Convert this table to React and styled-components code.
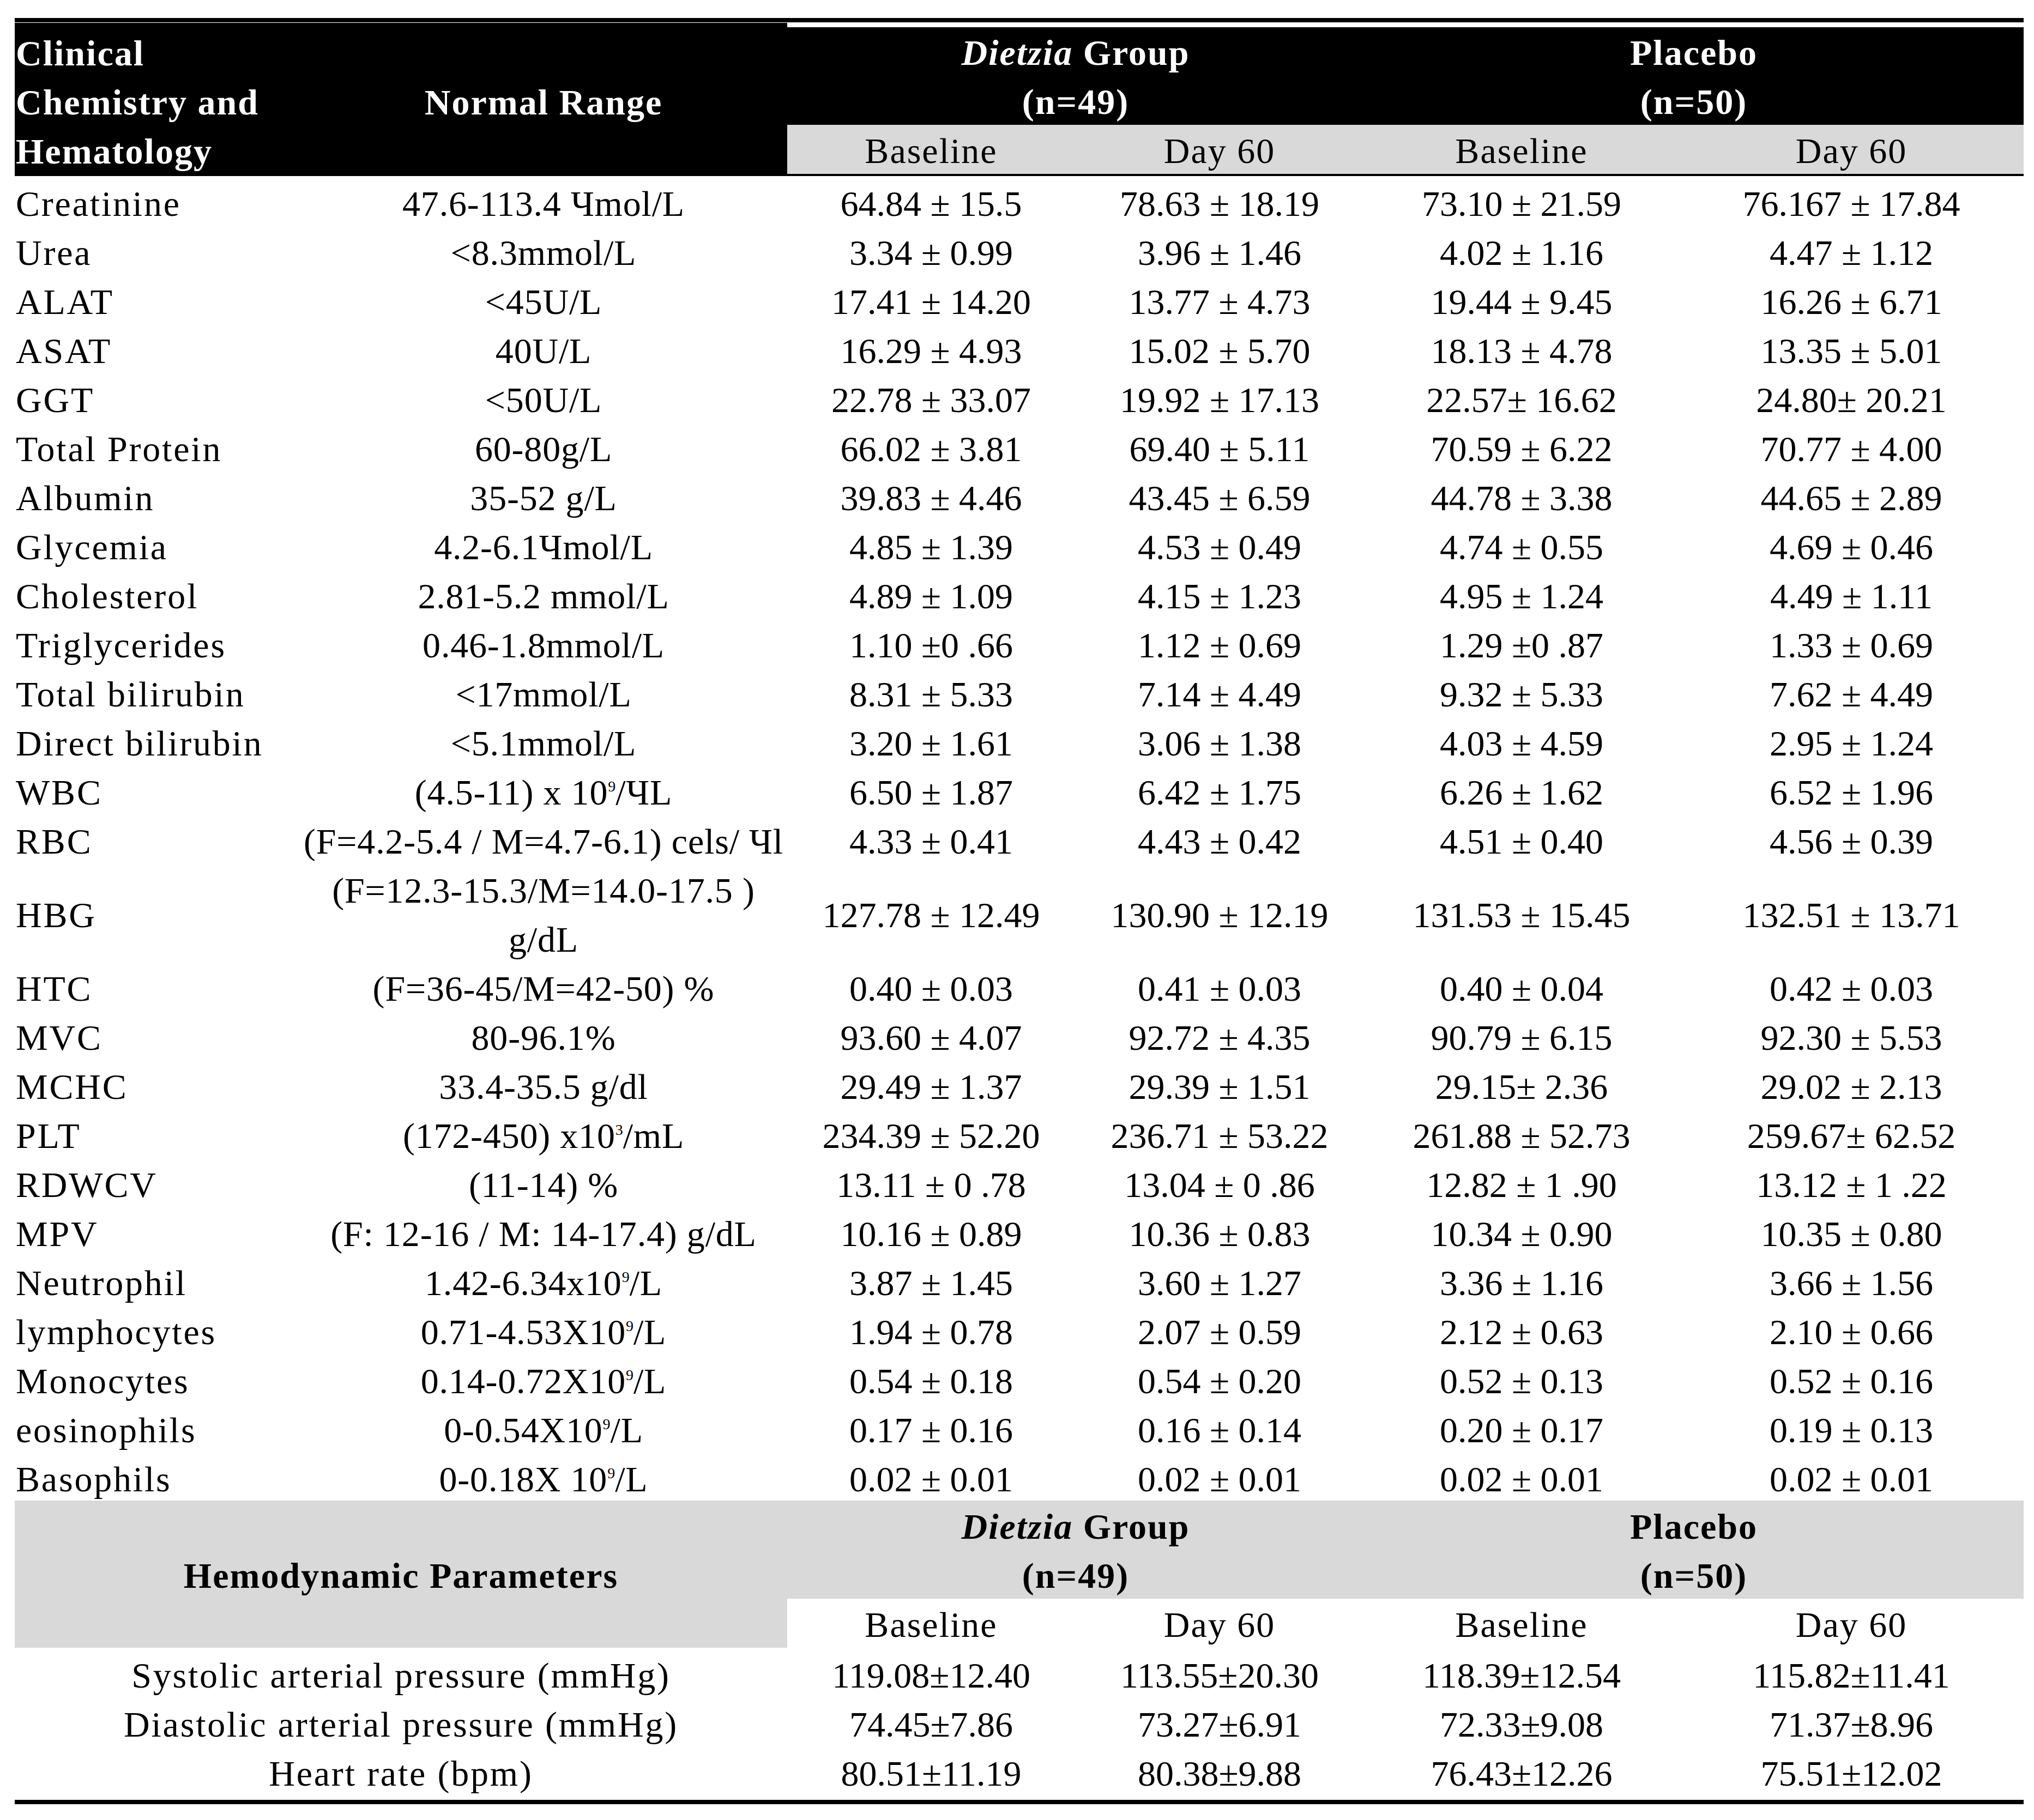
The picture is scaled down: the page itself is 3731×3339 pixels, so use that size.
import React from "react";
import styled, { createGlobalStyle } from "styled-components";

const COLS = "523px 894px 528px 530px 578px 632px";
const LINE = 90;
const GRAY = "#d9d9d9";

const GlobalStyle = createGlobalStyle`
  html, body { margin: 0; padding: 0; background: #ffffff; }
  body {
    font-family: "Liberation Serif", "Times New Roman", serif;
    font-size: 66px;
    color: #000000;
  }
`;

const Page = styled.div`
  padding: 33px 0 0 27px;
  width: 3685px;
`;

const Rule = styled.div`
  height: 8px;
  background: #000000;
  margin-top: ${(p) => p.$gap || 0}px;
`;

/* ---------- header ---------- */
const HeaderGrid = styled.div`
  display: grid;
  grid-template-columns: ${COLS};
  grid-template-rows: 8px 179px 90px 4px;
  margin-top: 1px;
`;

const HeadTitle = styled.div`
  grid-column: 1;
  grid-row: 1 / 5;
  background: #000000;
  color: #ffffff;
  font-weight: 700;
  line-height: ${LINE}px;
  letter-spacing: 2px;
  padding: 11px 0 0 2px;
  white-space: nowrap;
`;

const HeadRange = styled.div`
  grid-column: 2;
  grid-row: 1 / 5;
  background: #000000;
  color: #ffffff;
  font-weight: 700;
  line-height: ${LINE}px;
  letter-spacing: 2px;
  text-align: center;
  padding-top: 101px;
  white-space: nowrap;
`;

const GroupHead = styled.div`
  grid-column: ${(p) => p.$col} / span 2;
  grid-row: 2;
  background: #000000;
  color: #ffffff;
  font-weight: 700;
  line-height: ${LINE}px;
  letter-spacing: 2px;
  text-align: center;
  padding-top: 2px;
  white-space: nowrap;
`;

const SubHead = styled.div`
  grid-row: 3;
  grid-column: ${(p) => p.$col};
  background: ${GRAY};
  line-height: ${LINE}px;
  letter-spacing: 2px;
  text-align: center;
  padding-top: 3px;
  white-space: nowrap;
`;

const HeadBar = styled.div`
  grid-row: 4;
  grid-column: 3 / 7;
  background: #000000;
`;

/* ---------- body ---------- */
const Row = styled.div`
  display: grid;
  grid-template-columns: ${COLS};
  height: ${(p) => (p.$lines || 1) * LINE}px;
`;

const Cell = styled.div`
  display: flex;
  align-items: center;
  justify-content: center;
  text-align: center;
  line-height: ${LINE}px;
  padding-top: 6px;
  white-space: nowrap;
`;

const LabelCell = styled(Cell)`
  justify-content: flex-start;
  text-align: left;
  padding-left: 2px;
  letter-spacing: 2.8px;
`;

const RangeCell = styled(Cell)`
  letter-spacing: 0.8px;
`;

const ValueCell = styled(Cell)``;

const Sup = styled.span`
  font-size: 28px;
  line-height: 0;
  vertical-align: 24px;
  letter-spacing: 0;
`;

const Italic = styled.i`
  font-style: italic;
`;

/* ---------- hemodynamic ---------- */
const HemoGrid = styled.div`
  display: grid;
  grid-template-columns: ${COLS};
  grid-template-rows: 180px 90px;
`;

const HemoTitle = styled(Cell)`
  grid-column: 1 / 3;
  grid-row: 1 / 3;
  background: ${GRAY};
  font-weight: 700;
  letter-spacing: 2px;
`;

const HemoGroup = styled(Cell)`
  grid-column: ${(p) => p.$col} / span 2;
  grid-row: 1;
  background: ${GRAY};
  font-weight: 700;
  letter-spacing: 2px;
`;

const HemoSub = styled(Cell)`
  grid-column: ${(p) => p.$col};
  grid-row: 2;
  letter-spacing: 2px;
`;

const HemoLabel = styled(Cell)`
  grid-column: 1 / 3;
  letter-spacing: 2.8px;
`;

const x9 = (pre, post) => (
  <>
    {pre}
    <Sup>9</Sup>
    {post}
  </>
);

const rows = [
  ["Creatinine", "47.6-113.4 Чmol/L", "64.84 ± 15.5", "78.63 ± 18.19", "73.10 ± 21.59", "76.167 ± 17.84"],
  ["Urea", "<8.3mmol/L", "3.34 ± 0.99", "3.96 ± 1.46", "4.02 ± 1.16", "4.47 ± 1.12"],
  ["ALAT", "<45U/L", "17.41 ± 14.20", "13.77 ± 4.73", "19.44 ± 9.45", "16.26 ± 6.71"],
  ["ASAT", "40U/L", "16.29 ± 4.93", "15.02 ± 5.70", "18.13 ± 4.78", "13.35 ± 5.01"],
  ["GGT", "<50U/L", "22.78 ± 33.07", "19.92 ± 17.13", "22.57± 16.62", "24.80± 20.21"],
  ["Total Protein", "60-80g/L", "66.02 ± 3.81", "69.40 ± 5.11", "70.59 ± 6.22", "70.77 ± 4.00"],
  ["Albumin", "35-52 g/L", "39.83 ± 4.46", "43.45 ± 6.59", "44.78 ± 3.38", "44.65 ± 2.89"],
  ["Glycemia", "4.2-6.1Чmol/L", "4.85 ± 1.39", "4.53 ± 0.49", "4.74 ± 0.55", "4.69 ± 0.46"],
  ["Cholesterol", "2.81-5.2 mmol/L", "4.89 ± 1.09", "4.15 ± 1.23", "4.95 ± 1.24", "4.49 ± 1.11"],
  ["Triglycerides", "0.46-1.8mmol/L", "1.10 ±0 .66", "1.12 ± 0.69", "1.29 ±0 .87", "1.33 ± 0.69"],
  ["Total bilirubin", "<17mmol/L", "8.31 ± 5.33", "7.14 ± 4.49", "9.32 ± 5.33", "7.62 ± 4.49"],
  ["Direct bilirubin", "<5.1mmol/L", "3.20 ± 1.61", "3.06 ± 1.38", "4.03 ± 4.59", "2.95 ± 1.24"],
  ["WBC", x9("(4.5-11) x 10", "/ЧL"), "6.50 ± 1.87", "6.42 ± 1.75", "6.26 ± 1.62", "6.52 ± 1.96"],
  ["RBC", "(F=4.2-5.4 / M=4.7-6.1) cels/ Чl", "4.33 ± 0.41", "4.43 ± 0.42", "4.51 ± 0.40", "4.56 ± 0.39"],
  [
    "HBG",
    <>
      (F=12.3-15.3/M=14.0-17.5 )
      <br />
      g/dL
    </>,
    "127.78 ± 12.49",
    "130.90 ± 12.19",
    "131.53 ± 15.45",
    "132.51 ± 13.71",
    2,
  ],
  ["HTC", "(F=36-45/M=42-50) %", "0.40 ± 0.03", "0.41 ± 0.03", "0.40 ± 0.04", "0.42 ± 0.03"],
  ["MVC", "80-96.1%", "93.60 ± 4.07", "92.72 ± 4.35", "90.79 ± 6.15", "92.30 ± 5.53"],
  ["MCHC", "33.4-35.5 g/dl", "29.49 ± 1.37", "29.39 ± 1.51", "29.15± 2.36", "29.02 ± 2.13"],
  [
    "PLT",
    <>
      (172-450) x10<Sup>3</Sup>/mL
    </>,
    "234.39 ± 52.20",
    "236.71 ± 53.22",
    "261.88 ± 52.73",
    "259.67± 62.52",
  ],
  ["RDWCV", "(11-14) %", "13.11 ± 0 .78", "13.04 ± 0 .86", "12.82 ± 1 .90", "13.12 ± 1 .22"],
  ["MPV", "(F: 12-16 / M: 14-17.4) g/dL", "10.16 ± 0.89", "10.36 ± 0.83", "10.34 ± 0.90", "10.35 ± 0.80"],
  ["Neutrophil", x9("1.42-6.34x10", "/L"), "3.87 ± 1.45", "3.60 ± 1.27", "3.36 ± 1.16", "3.66 ± 1.56"],
  ["lymphocytes", x9("0.71-4.53X10", "/L"), "1.94 ± 0.78", "2.07 ± 0.59", "2.12 ± 0.63", "2.10 ± 0.66"],
  ["Monocytes", x9("0.14-0.72X10", "/L"), "0.54 ± 0.18", "0.54 ± 0.20", "0.52 ± 0.13", "0.52 ± 0.16"],
  ["eosinophils", x9("0-0.54X10", "/L"), "0.17 ± 0.16", "0.16 ± 0.14", "0.20 ± 0.17", "0.19 ± 0.13"],
  ["Basophils", x9("0-0.18X 10", "/L"), "0.02 ± 0.01", "0.02 ± 0.01", "0.02 ± 0.01", "0.02 ± 0.01"],
];

const hemoRows = [
  ["Systolic arterial pressure (mmHg)", "119.08±12.40", "113.55±20.30", "118.39±12.54", "115.82±11.41"],
  ["Diastolic arterial pressure (mmHg)", "74.45±7.86", "73.27±6.91", "72.33±9.08", "71.37±8.96"],
  ["Heart rate (bpm)", "80.51±11.19", "80.38±9.88", "76.43±12.26", "75.51±12.02"],
];

const subLabels = ["Baseline", "Day 60", "Baseline", "Day 60"];

const DietziaTitle = () => (
  <>
    <Italic>Dietzia</Italic> Group
    <br />
    (n=49)
  </>
);

const PlaceboTitle = () => (
  <>
    Placebo
    <br />
    (n=50)
  </>
);

export default function App() {
  return (
    <>
      <GlobalStyle />
      <Page>
        <Rule />
        <HeaderGrid>
          <HeadTitle>
            Clinical
            <br />
            Chemistry and
            <br />
            Hematology
          </HeadTitle>
          <HeadRange>Normal Range</HeadRange>
          <GroupHead $col={3}>
            <DietziaTitle />
          </GroupHead>
          <GroupHead $col={5}>
            <PlaceboTitle />
          </GroupHead>
          {subLabels.map((s, i) => (
            <SubHead key={i} $col={i + 3}>
              {s}
            </SubHead>
          ))}
          <HeadBar />
        </HeaderGrid>

        {rows.map((r, i) => (
          <Row key={i} $lines={r[6] || 1}>
            <LabelCell>{r[0]}</LabelCell>
            <RangeCell>
              <span>{r[1]}</span>
            </RangeCell>
            <ValueCell>{r[2]}</ValueCell>
            <ValueCell>{r[3]}</ValueCell>
            <ValueCell>{r[4]}</ValueCell>
            <ValueCell>{r[5]}</ValueCell>
          </Row>
        ))}

        <HemoGrid>
          <HemoTitle>Hemodynamic Parameters</HemoTitle>
          <HemoGroup $col={3}>
            <span>
              <DietziaTitle />
            </span>
          </HemoGroup>
          <HemoGroup $col={5}>
            <span>
              <PlaceboTitle />
            </span>
          </HemoGroup>
          {subLabels.map((s, i) => (
            <HemoSub key={i} $col={i + 3}>
              {s}
            </HemoSub>
          ))}
        </HemoGrid>

        {hemoRows.map((r, i) => (
          <Row key={i}>
            <HemoLabel>{r[0]}</HemoLabel>
            <ValueCell>{r[1]}</ValueCell>
            <ValueCell>{r[2]}</ValueCell>
            <ValueCell>{r[3]}</ValueCell>
            <ValueCell>{r[4]}</ValueCell>
          </Row>
        ))}

        <Rule $gap={9} />
      </Page>
    </>
  );
}
